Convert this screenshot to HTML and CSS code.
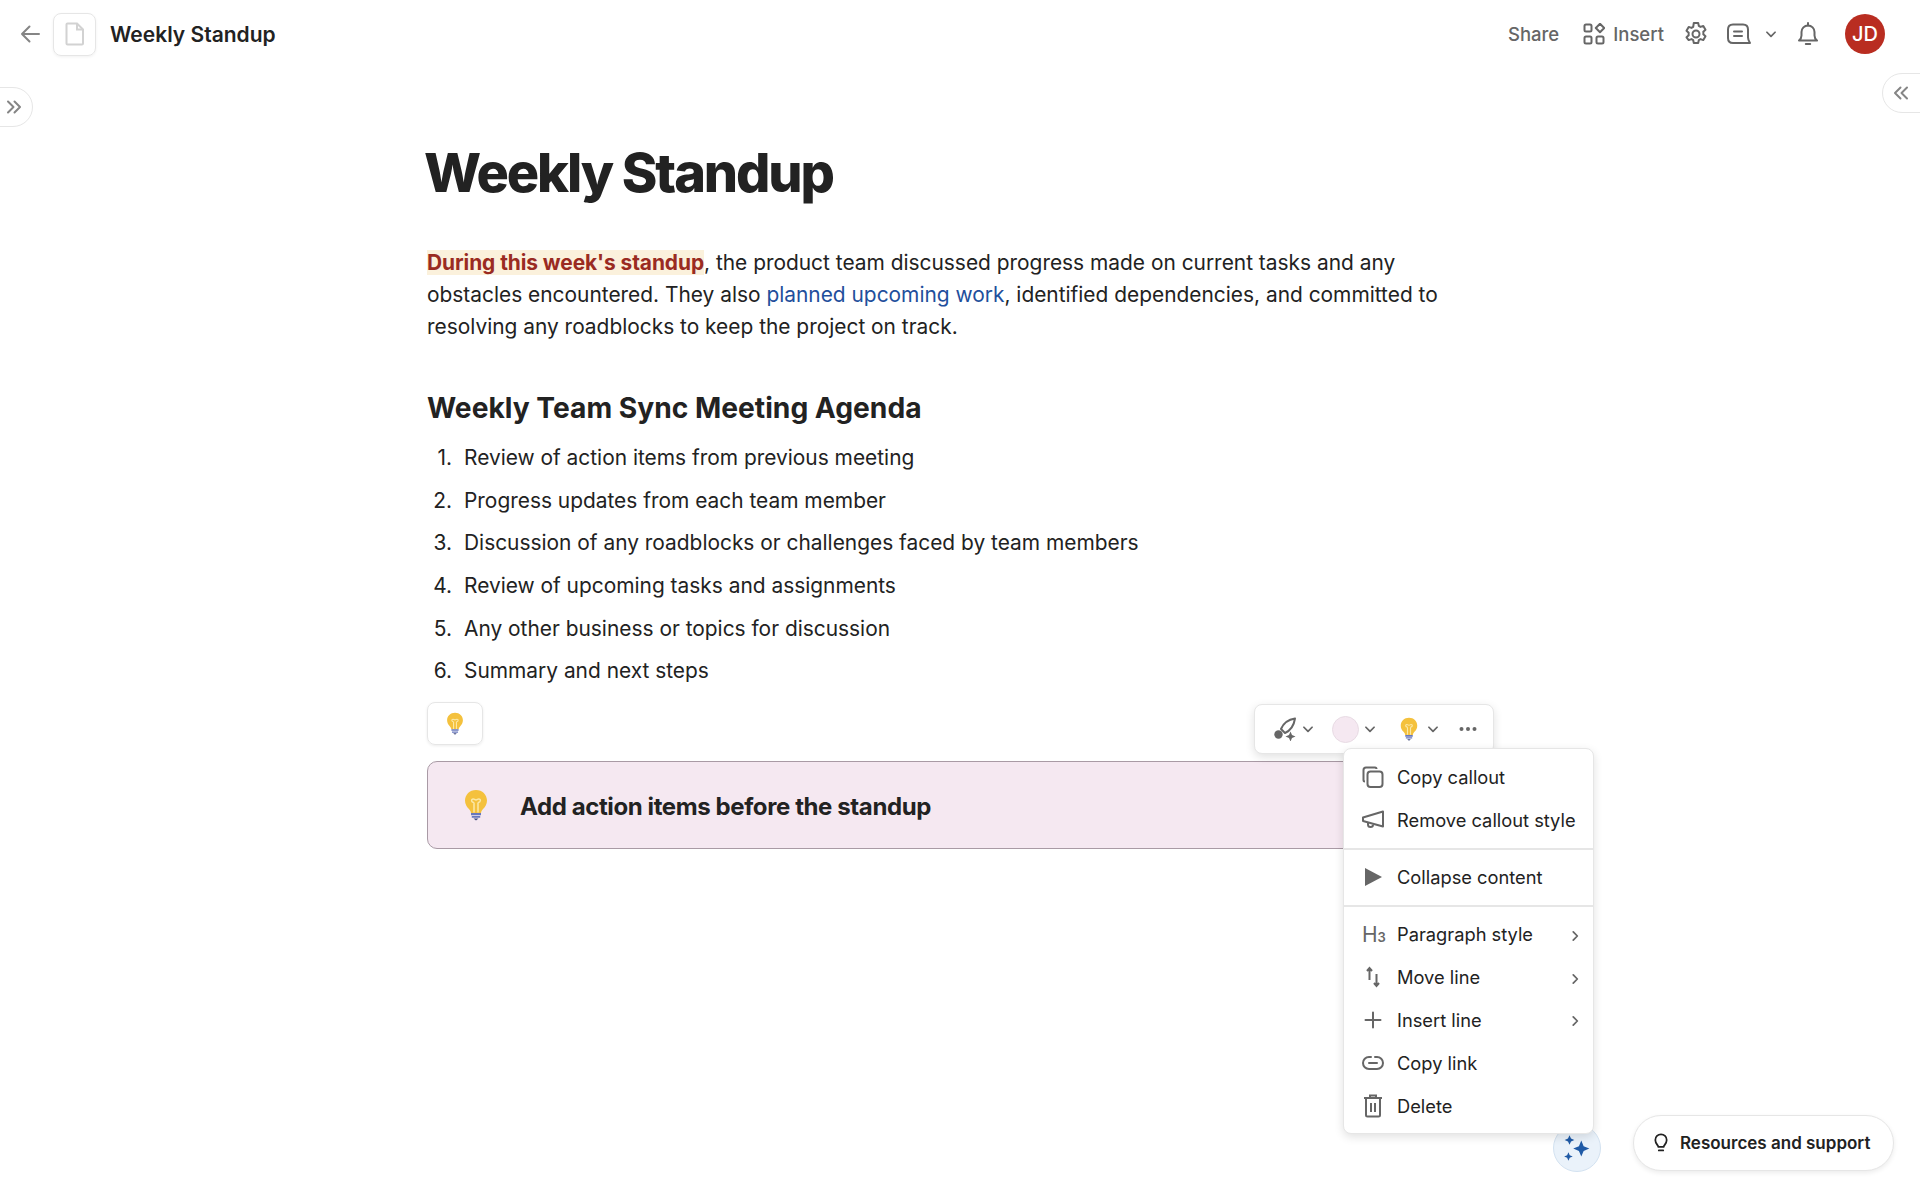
FILE: index.html
```html
<!DOCTYPE html>
<html lang="en">
<head>
    <meta charset="UTF-8">
    <title>Weekly Standup</title>
    <link rel="stylesheet" href="styles.css">
</head>
<body>
    <svg class="defs" width="0" height="0">
        <symbol id="bulb" viewBox="0 0 24 32">
            <path d="M12 1C5.6 1 1 5.700 1 11.500c0 3.700 1.800 6.200 3.700 8.300 1.300 1.400 2 2.700 2.300 4.200h10c.3-1.500 1-2.800 2.300-4.200 1.900-2.100 3.700-4.600 3.700-8.300C23 5.700 18.400 1 12 1z" fill="#f4c13d"/>
            <path d="M10 23.500V13.500M14 23.500V13.500M10 13.500c-3 0-3-3.500-.8-3.500 1.200 0 1.500 1 2.800 1s1.600-1 2.800-1c2.200 0 2.200 3.500-.8 3.500" fill="none" stroke="#fbe9a8" stroke-width="1.500"/>
            <path d="M7 24h10v2.200H7zM7.800 27h8.400v1.800H7.800z" fill="#6878bd"/>
            <path d="M9.500 29.500h5L12 31.500z" fill="#3f4a7d"/>
        </symbol>
        <symbol id="chev-down" viewBox="0 0 12 12">
            <path d="M2.500 4.500L6 8l3.500-3.500" fill="none" stroke="currentColor" stroke-width="1.500" stroke-linecap="round" stroke-linejoin="round"/>
        </symbol>
        <symbol id="chev-right" viewBox="0 0 12 12">
            <path d="M4.500 2.500L8 6 4.500 9.500" fill="none" stroke="currentColor" stroke-width="1.500" stroke-linecap="round" stroke-linejoin="round"/>
        </symbol>
    </svg>

    <header class="topbar">
        <div class="topbar-left">
            <svg class="icon-back" width="22" height="22" viewBox="0 0 22 22"><path d="M20 11H3M10.500 3.500L3 11l7.500 7.500" fill="none" stroke="#858585" stroke-width="2" stroke-linecap="round" stroke-linejoin="round"/></svg>
            <div class="doc-btn">
                <svg width="20" height="24" viewBox="0 0 20 24"><path d="M2.500 1.500h9.500l6 6v14a1 1 0 0 1-1 1h-14.500a1 1 0 0 1-1-1v-19a1 1 0 0 1 1-1z" fill="none" stroke="#d2d2d2" stroke-width="2"/><path d="M12 1.500v6h6" fill="none" stroke="#d2d2d2" stroke-width="2"/></svg>
            </div>
            <span class="doc-name">Weekly Standup</span>
        </div>
        <div class="topbar-right">
            <span class="top-link share">Share</span>
            <span class="top-insert">
                <svg width="22" height="22" viewBox="0 0 22 22" fill="none" stroke="#666" stroke-width="2"><rect x="1.500" y="1.500" width="7" height="7" rx="1.500"/><rect x="1.500" y="13.500" width="7" height="7" rx="1.500"/><rect x="13.500" y="13.500" width="7" height="7" rx="1.500"/><path d="M17 .8L21.200 5 17 9.200 12.800 5z" stroke-linejoin="round"/></svg>
                <span class="top-link">Insert</span>
            </span>
            <svg class="icon-gear" width="24" height="24" viewBox="0 0 24 24" fill="none" stroke="#666" stroke-width="2" stroke-linejoin="round"><path d="M9.800 2h4.400l.6 2.900 1.700 1 2.800-1 2.200 3.800-2.200 2 .1 1.300-.1 1.300 2.200 2-2.200 3.800-2.800-1-1.700 1-.6 2.900H9.800l-.6-2.900-1.700-1-2.800 1L2.500 16.300l2.200-2-.1-1.300.1-1.300-2.200-2L4.700 5.900l2.800 1 1.700-1z" transform="translate(0 -1)"/><circle cx="12" cy="12" r="3.500"/></svg>
            <svg class="icon-comment" width="24" height="22" viewBox="0 0 24 22" fill="none" stroke="#666" stroke-width="2" stroke-linecap="round"><path d="M6 1.500h10c3 0 5 2 5 5v8c0 2 .8 3.500 2 5.500H6c-3 0-5-2-5-5v-8.500c0-3 2-5 5-5z" stroke-linejoin="round"/><path d="M7 8.500h8M7 13h8"/></svg>
            <svg class="icon-chev" width="14" height="14"><use href="#chev-down"/></svg>
            <svg class="icon-bell" width="20" height="24" viewBox="0 0 20 24" fill="none" stroke="#666" stroke-width="2" stroke-linejoin="round"><path d="M1 18.500c1.800-1.500 2.500-3 2.500-5V10a6.500 6.500 0 0 1 13 0v3.500c0 2 .7 3.500 2.500 5z"/><path d="M10 1v2.500M7.800 22h4.400" stroke-linecap="round"/></svg>
            <div class="avatar">JD</div>
        </div>
    </header>

    <button class="side-tab side-tab-left">
        <svg width="16" height="14" viewBox="0 0 16 14" fill="none" stroke="#858585" stroke-width="2" stroke-linecap="round" stroke-linejoin="round"><path d="M2 1.500L7.500 7 2 12.500M8.500 1.500L14 7l-5.500 5.500"/></svg>
    </button>
    <button class="side-tab side-tab-right">
        <svg width="16" height="14" viewBox="0 0 16 14" fill="none" stroke="#858585" stroke-width="2" stroke-linecap="round" stroke-linejoin="round"><path d="M14 1.500L8.500 7l5.500 5.500M7.500 1.500L2 7l5.500 5.500"/></svg>
    </button>

    <main class="page">
        <h1 class="doc-title">Weekly Standup</h1>
        <p class="intro"><strong class="hilite">During this week's standup</strong>, the product team discussed progress made on current tasks and any obstacles encountered. They also <a class="doc-link">planned upcoming work</a>, identified dependencies, and committed to resolving any roadblocks to keep the project on track.</p>
        <h2 class="agenda-title">Weekly Team Sync Meeting Agenda</h2>
        <ol class="agenda">
            <li>Review of action items from previous meeting</li>
            <li>Progress updates from each team member</li>
            <li>Discussion of any roadblocks or challenges faced by team members</li>
            <li>Review of upcoming tasks and assignments</li>
            <li>Any other business or topics for discussion</li>
            <li>Summary and next steps</li>
        </ol>
        <div class="emoji-btn"><svg width="18" height="23"><use href="#bulb"/></svg></div>
        <div class="callout">
            <svg width="24" height="32"><use href="#bulb"/></svg>
            <span class="callout-text">Add action items before the standup</span>
        </div>
    </main>

    <div class="toolbar">
        <svg width="24" height="24" viewBox="0 0 24 24" fill="none" stroke="#666" stroke-width="2" stroke-linejoin="round"><path d="M22 1.500C15.500 2.500 10.500 6 8 12l4 4c5.500-2.500 9-8 10-14.500z"/><circle cx="5.500" cy="17.500" r="4.200" fill="#666" stroke="none"/><path d="M17.500 14.500l1.500 3.500 3.500 1.500-3.500 1.500-1.500 3.500-1.500-3.500-3.500-1.500 3.500-1.500z" fill="#666" stroke="none"/></svg>
        <svg class="tool-chev" width="14" height="14"><use href="#chev-down"/></svg>
        <span class="swatch"></span>
        <svg class="tool-chev tool-chev-swatch" width="14" height="14"><use href="#chev-down"/></svg>
        <svg class="tool-bulb" width="18" height="24"><use href="#bulb"/></svg>
        <svg class="tool-chev tool-chev-bulb" width="14" height="14"><use href="#chev-down"/></svg>
        <svg class="tool-more" width="18" height="6" viewBox="0 0 18 6" fill="#666"><circle cx="2.500" cy="3" r="2"/><circle cx="9" cy="3" r="2"/><circle cx="15.500" cy="3" r="2"/></svg>
    </div>

    <div class="menu">
        <div class="menu-group">
            <div class="menu-item">
                <svg class="menu-icon" width="22" height="22" viewBox="0 0 22 22" fill="none" stroke="#666" stroke-width="2"><path d="M3 15.500c-1 0-1.500-.7-1.500-1.500V4c0-1.500 1-2.500 2.500-2.500h9c1 0 1.500.5 1.500 1.500"/><rect x="5.500" y="5.500" width="15" height="15.500" rx="3"/></svg>
                Copy callout
            </div>
            <div class="menu-item">
                <svg class="menu-icon" width="22" height="20" viewBox="0 0 22 20" fill="none" stroke="#666" stroke-width="2" stroke-linejoin="round"><path d="M21 1.500v15L1 11V7.500z"/><path d="M6 12.500v2c0 1.500 1 2.500 2.500 2.500s2.500-.8 2.500-2.200"/></svg>
                Remove callout style
            </div>
        </div>
        <div class="menu-group">
            <div class="menu-item">
                <svg class="menu-icon" width="22" height="20" viewBox="0 0 22 20" fill="#666"><path d="M3 1l17 9-17 9z"/></svg>
                Collapse content
            </div>
        </div>
        <div class="menu-group">
            <div class="menu-item">
                <span class="menu-icon h3-icon">H<small>3</small></span>
                Paragraph style
                <svg class="menu-arrow" width="14" height="14"><use href="#chev-right"/></svg>
            </div>
            <div class="menu-item">
                <svg class="menu-icon" width="22" height="22" viewBox="0 0 22 22" fill="none" stroke="#666" stroke-width="2"><path d="M7.500 14V2M5 5l2.500-3L10 5M14.500 8v12M12 17l2.500 3 2.500-3"/></svg>
                Move line
                <svg class="menu-arrow" width="14" height="14"><use href="#chev-right"/></svg>
            </div>
            <div class="menu-item">
                <svg class="menu-icon" width="22" height="22" viewBox="0 0 22 22" fill="none" stroke="#666" stroke-width="2" stroke-linecap="round"><path d="M11 3.500v15M3.500 11h15"/></svg>
                Insert line
                <svg class="menu-arrow" width="14" height="14"><use href="#chev-right"/></svg>
            </div>
            <div class="menu-item">
                <svg class="menu-icon" width="22" height="16" viewBox="0 0 22 16" fill="none" stroke="#666" stroke-width="2" stroke-linecap="round"><path d="M9 2H7a6 6 0 0 0 0 12h8a6 6 0 0 0 0-12h-2"/><path d="M7 8h8"/></svg>
                Copy link
            </div>
            <div class="menu-item">
                <svg class="menu-icon" width="22" height="24" viewBox="0 0 22 24" fill="none" stroke="#666" stroke-width="2"><path d="M2 4h18M8 4V1.500h6V4"/><path d="M4 4h14v17a1.500 1.500 0 0 1-1.500 1.500h-11A1.500 1.500 0 0 1 4 21zM9 9v9M13 9v9"/></svg>
                Delete
            </div>
        </div>
    </div>

    <div class="ai-btn">
        <svg width="30" height="30" viewBox="0 0 28 28" fill="#1f5aa6"><path d="M18 7l2.200 5.300 5.300 2.200-5.300 2.200L18 22l-2.200-5.300-5.300-2.200 5.300-2.200zM7 2l1.400 3.100L11.500 6.500 8.400 7.900 7 11 5.600 7.900 2.500 6.500l3.100-1.400zM6 18l1.200 2.800L10 22l-2.800 1.200L6 26l-1.200-2.800L2 22l2.800-1.200z"/></svg>
    </div>

    <div class="help-pill">
        <svg width="14" height="20" viewBox="0 0 16 22" fill="none" stroke="#222" stroke-width="2" stroke-linecap="round"><path d="M5 15.500c0-2-3.500-3.500-3.500-8a6.500 6.500 0 0 1 13 0c0 4.500-3.500 6-3.500 8z" stroke-linejoin="round"/><path d="M5.500 19.500h5"/></svg>
        Resources and support
    </div>
</body>
</html>
```

FILE: styles.css
```css
:root {
    --text-primary: #222;
    --text-muted: #666;
    --border-light: #e6e6e6;
    --callout-bg: #f5e8f1;
    --shadow-menu: 0 3px 10px rgba(0, 0, 0, 0.12);
}

* {
    margin: 0;
    padding: 0;
    box-sizing: border-box;
}

body {
    position: relative;
    height: 1200px;
    overflow: hidden;
    background: #fff;
    color: var(--text-primary);
    font-family: Inter, "Liberation Sans", sans-serif;
}

.defs {
    position: absolute;
}

/* top bar */
.topbar {
    height: 68px;
    padding: 0 35px 0 19px;
    display: flex;
    align-items: center;
    justify-content: space-between;
}

.topbar-left {
    display: flex;
    align-items: center;
}

.doc-btn {
    width: 43px;
    height: 43px;
    margin-left: 12px;
    border: 1px solid var(--border-light);
    border-radius: 8px;
    box-shadow: 0 1px 3px rgba(0, 0, 0, 0.06);
    display: flex;
    align-items: center;
    justify-content: center;
}

.doc-name {
    margin-left: 14px;
    font-size: 21px;
    font-weight: 600;
}

.topbar-right {
    display: flex;
    align-items: center;
    color: var(--text-muted);
}

.top-link {
    font-size: 18.500px;
    font-weight: 500;
}

.top-insert {
    margin-left: 24px;
    display: flex;
    align-items: center;
    gap: 8px;
}

.icon-gear {
    margin-left: 20px;
}

.icon-comment {
    margin-left: 19px;
}

.icon-chev {
    margin-left: 13px;
}

.icon-bell {
    margin-left: 20px;
}

.avatar {
    width: 40px;
    height: 40px;
    margin-left: 27px;
    border-radius: 50%;
    background: #b92d21;
    color: #fff;
    font-size: 20px;
    font-weight: 500;
    display: flex;
    align-items: center;
    justify-content: center;
}

/* side tabs */
.side-tab {
    position: absolute;
    height: 40px;
    background: #fff;
    border: 1px solid var(--border-light);
    display: flex;
    align-items: center;
}

.side-tab-left {
    left: -1px;
    top: 87px;
    width: 34px;
    padding-left: 6px;
    border-radius: 0 20px 20px 0;
}

.side-tab-right {
    right: -1px;
    top: 73px;
    width: 39px;
    padding-left: 10px;
    border-radius: 20px 0 0 20px;
}

/* document */
.page {
    padding-left: 427px;
    width: 1510px;
}

.doc-title {
    margin: 72px 0 0 -3px;
    font-size: 54px;
    line-height: 66px;
    font-weight: 800;
    letter-spacing: -2.100px;
}

.intro {
    margin-top: 41px;
    width: 1030px;
    font-size: 20.900px;
    line-height: 32px;
}

.hilite {
    color: #9a2b22;
    font-weight: 700;
    letter-spacing: -0.060px;
    background: #fbf1dc;
}

.doc-link {
    color: #1f4f9c;
}

.agenda-title {
    margin-top: 47px;
    font-size: 28.200px;
    line-height: 36px;
    font-weight: 700;
}

.agenda {
    margin-top: 10px;
    list-style: none;
    counter-reset: agenda;
    font-size: 20.900px;
}

.agenda li {
    counter-increment: agenda;
    height: 42.700px;
    display: flex;
    align-items: center;
}

.agenda li::before {
    content: counter(agenda) ".";
    width: 25px;
    padding-right: 12px;
    text-align: right;
}

.emoji-btn {
    width: 56px;
    height: 43px;
    margin-top: 10px;
    border: 1px solid var(--border-light);
    border-radius: 8px;
    box-shadow: 0 1px 3px rgba(0, 0, 0, 0.08);
    display: flex;
    align-items: center;
    justify-content: center;
}

.callout {
    height: 88px;
    margin-top: 16px;
    padding-left: 36px;
    background: var(--callout-bg);
    border: 1px solid #a99aa5;
    border-radius: 10px;
    display: flex;
    align-items: center;
}

.callout-text {
    margin: 2px 0 0 32px;
    font-size: 24px;
    font-weight: 700;
    letter-spacing: -0.400px;
}

/* floating editor bits */
.toolbar {
    position: absolute;
    left: 1254px;
    top: 704px;
    width: 240px;
    height: 50px;
    padding-left: 18px;
    background: #fff;
    border: 1px solid var(--border-light);
    border-radius: 8px;
    box-shadow: var(--shadow-menu);
    color: var(--text-muted);
    display: flex;
    align-items: center;
}

.tool-chev {
    margin-left: 4px;
}

.swatch {
    width: 27px;
    height: 27px;
    margin-left: 17px;
    border-radius: 50%;
    background: var(--callout-bg);
    border: 1px solid #e8dbe4;
}

.tool-chev-swatch {
    margin-left: 4px;
}

.tool-bulb {
    margin-left: 23px;
}

.tool-chev-bulb {
    margin-left: 8px;
}

.tool-more {
    margin-left: 19px;
}

.menu {
    position: absolute;
    left: 1343px;
    top: 748px;
    width: 251px;
    background: #fff;
    border: 1px solid var(--border-light);
    border-radius: 8px;
    box-shadow: var(--shadow-menu);
    font-size: 18.300px;
    color: var(--text-primary);
}

.menu-group {
    padding: 6px 0;
    border-top: 2px solid var(--border-light);
}

.menu-group:first-child {
    padding-top: 7px;
    border-top: none;
}

.menu-item {
    position: relative;
    height: 42.900px;
    padding-left: 53px;
    display: flex;
    align-items: center;
}

.menu-icon {
    position: absolute;
    left: 18px;
    top: 50%;
    transform: translateY(-50%);
}

.h3-icon {
    font-size: 21px;
    color: var(--text-muted);
}

.h3-icon small {
    font-size: 13px;
    font-weight: 600;
}

.menu-arrow {
    position: absolute;
    right: 11px;
    top: 16px;
    color: var(--text-muted);
}

.ai-btn {
    position: absolute;
    left: 1553px;
    top: 1124px;
    width: 48px;
    height: 48px;
    border-radius: 50%;
    background: #eaf2fa;
    border: 1px solid #d3e2f1;
    display: flex;
    align-items: center;
    justify-content: center;
    z-index: -1;
}

.help-pill {
    position: absolute;
    left: 1633px;
    top: 1115px;
    width: 261px;
    height: 56px;
    padding-left: 20px;
    background: #fff;
    border: 1px solid var(--border-light);
    border-radius: 28px;
    box-shadow: 0 2px 5px rgba(0, 0, 0, 0.08);
    font-size: 17px;
    font-weight: 600;
    display: flex;
    align-items: center;
    gap: 12px;
}
```
